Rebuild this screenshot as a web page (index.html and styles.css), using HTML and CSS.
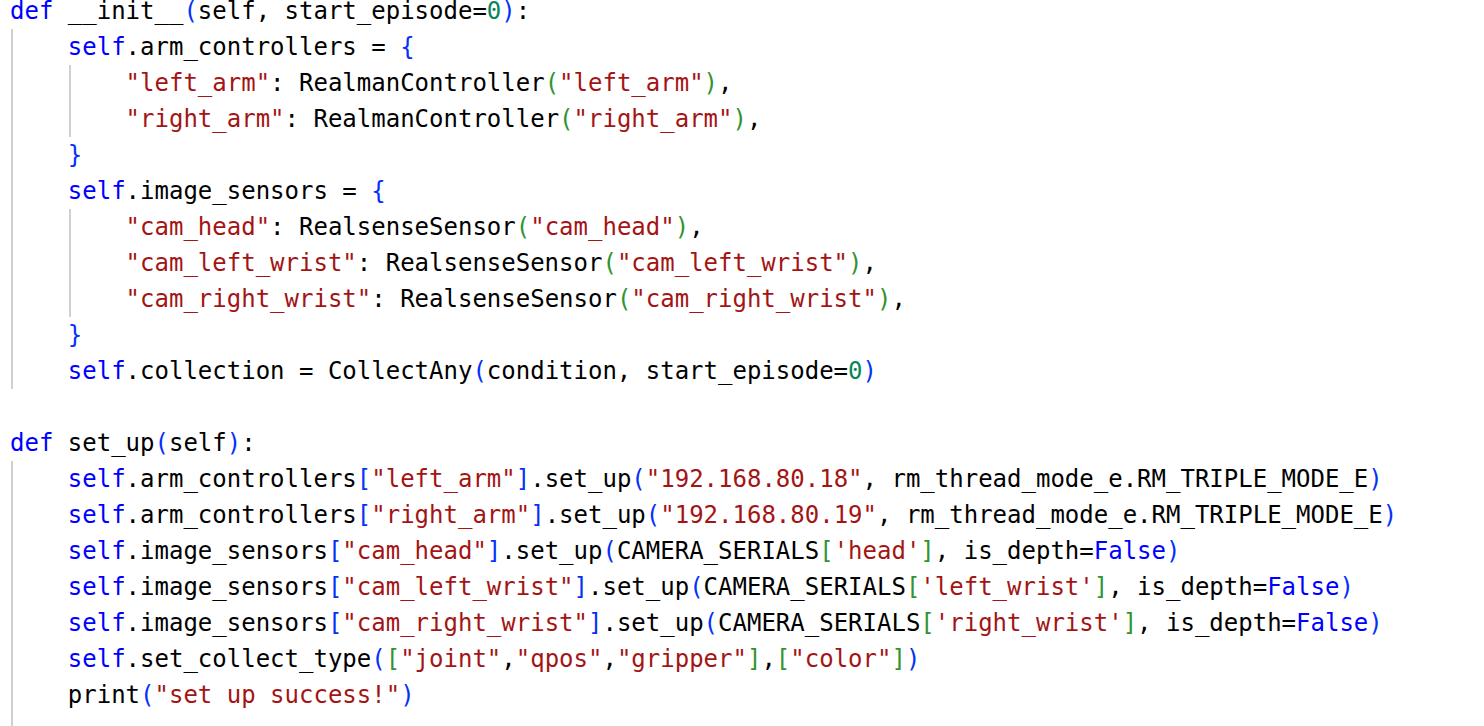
FILE: index.html
```html
<!DOCTYPE html>
<html lang="en">
<head>
<meta charset="utf-8">
<title>code</title>
<link rel="stylesheet" href="styles.css">
</head>
<body>
<div class="code">
<div class="ln"><span class="k">def</span> __init__<span class="b1">(</span>self, start_episode=<span class="n">0</span><span class="b1">)</span>:</div>
<div class="ln"><span class="ind"></span><span class="k">self</span>.arm_controllers = <span class="b1">{</span></div>
<div class="ln"><span class="ind"></span><span class="ind"></span><span class="s">"left_arm"</span>: RealmanController<span class="b2">(</span><span class="s">"left_arm"</span><span class="b2">)</span>,</div>
<div class="ln"><span class="ind"></span><span class="ind"></span><span class="s">"right_arm"</span>: RealmanController<span class="b2">(</span><span class="s">"right_arm"</span><span class="b2">)</span>,</div>
<div class="ln"><span class="ind"></span><span class="b1">}</span></div>
<div class="ln"><span class="ind"></span><span class="k">self</span>.image_sensors = <span class="b1">{</span></div>
<div class="ln"><span class="ind"></span><span class="ind"></span><span class="s">"cam_head"</span>: RealsenseSensor<span class="b2">(</span><span class="s">"cam_head"</span><span class="b2">)</span>,</div>
<div class="ln"><span class="ind"></span><span class="ind"></span><span class="s">"cam_left_wrist"</span>: RealsenseSensor<span class="b2">(</span><span class="s">"cam_left_wrist"</span><span class="b2">)</span>,</div>
<div class="ln"><span class="ind"></span><span class="ind"></span><span class="s">"cam_right_wrist"</span>: RealsenseSensor<span class="b2">(</span><span class="s">"cam_right_wrist"</span><span class="b2">)</span>,</div>
<div class="ln"><span class="ind"></span><span class="b1">}</span></div>
<div class="ln"><span class="ind"></span><span class="k">self</span>.collection = CollectAny<span class="b1">(</span>condition, start_episode=<span class="n">0</span><span class="b1">)</span></div>
<div class="ln"></div>
<div class="ln"><span class="k">def</span> set_up<span class="b1">(</span>self<span class="b1">)</span>:</div>
<div class="ln"><span class="ind"></span><span class="k">self</span>.arm_controllers<span class="b1">[</span><span class="s">"left_arm"</span><span class="b1">]</span>.set_up<span class="b1">(</span><span class="s">"192.168.80.18"</span>, rm_thread_mode_e.RM_TRIPLE_MODE_E<span class="b1">)</span></div>
<div class="ln"><span class="ind"></span><span class="k">self</span>.arm_controllers<span class="b1">[</span><span class="s">"right_arm"</span><span class="b1">]</span>.set_up<span class="b1">(</span><span class="s">"192.168.80.19"</span>, rm_thread_mode_e.RM_TRIPLE_MODE_E<span class="b1">)</span></div>
<div class="ln"><span class="ind"></span><span class="k">self</span>.image_sensors<span class="b1">[</span><span class="s">"cam_head"</span><span class="b1">]</span>.set_up<span class="b1">(</span>CAMERA_SERIALS<span class="b2">[</span><span class="s">'head'</span><span class="b2">]</span>, is_depth=<span class="k">False</span><span class="b1">)</span></div>
<div class="ln"><span class="ind"></span><span class="k">self</span>.image_sensors<span class="b1">[</span><span class="s">"cam_left_wrist"</span><span class="b1">]</span>.set_up<span class="b1">(</span>CAMERA_SERIALS<span class="b2">[</span><span class="s">'left_wrist'</span><span class="b2">]</span>, is_depth=<span class="k">False</span><span class="b1">)</span></div>
<div class="ln"><span class="ind"></span><span class="k">self</span>.image_sensors<span class="b1">[</span><span class="s">"cam_right_wrist"</span><span class="b1">]</span>.set_up<span class="b1">(</span>CAMERA_SERIALS<span class="b2">[</span><span class="s">'right_wrist'</span><span class="b2">]</span>, is_depth=<span class="k">False</span><span class="b1">)</span></div>
<div class="ln"><span class="ind"></span><span class="k">self</span>.set_collect_type<span class="b1">(</span><span class="b2">[</span><span class="s">"joint"</span>,<span class="s">"qpos"</span>,<span class="s">"gripper"</span><span class="b2">]</span>,<span class="b2">[</span><span class="s">"color"</span><span class="b2">]</span><span class="b1">)</span></div>
<div class="ln"><span class="ind"></span>print<span class="b1">(</span><span class="s">"set up success!"</span><span class="b1">)</span></div>
<div class="ln"><span class="ind"></span></div>
</div>
</body>
</html>
```
FILE: styles.css
```css
html, body {
  margin: 0;
  padding: 0;
  background: #ffffff;
  overflow: hidden;
}

.code {
  margin-top: -7px;
  padding-left: 10px;
  font-family: "DejaVu Sans Mono", "Liberation Mono", monospace;
  font-size: 24px;
  line-height: 36px;
  color: #000000;
}

.ln {
  height: 36px;
  white-space: pre;
  display: flex;
  align-items: flex-start;
}

.ind {
  display: inline-block;
  flex: none;
  width: 4ch;
  height: 36px;
  background: linear-gradient(to right, transparent 1px, #d0d0d0 1px, #d0d0d0 3px, transparent 3px);
}

.k { color: #0000ff; }
.s { color: #a31515; }
.n { color: #098658; }
.b1 { color: #0431fa; }
.b2 { color: #319331; }
```
